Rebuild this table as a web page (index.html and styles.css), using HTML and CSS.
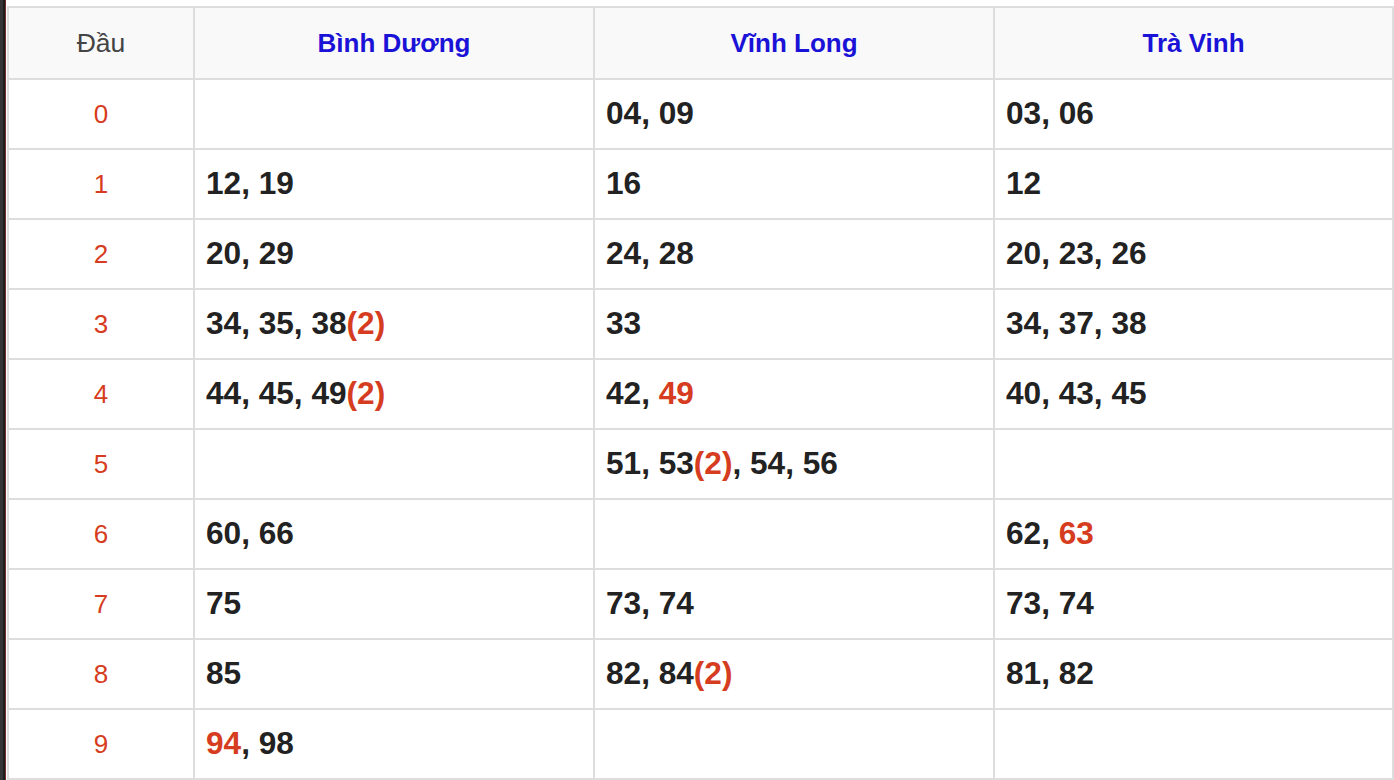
FILE: index.html
```html
<!DOCTYPE html>
<html lang="vi">
<head>
<meta charset="utf-8">
<title>Lô tô</title>
<link rel="stylesheet" href="styles.css">
</head>
<body>
<div class="edge"></div>
<div class="board">
  <div class="cell head head-dau">Đầu</div>
  <div class="cell head">Bình Dương</div>
  <div class="cell head">Vĩnh Long</div>
  <div class="cell head">Trà Vinh</div>

  <div class="cell dau">0</div>
  <div class="cell num"></div>
  <div class="cell num">04, 09</div>
  <div class="cell num">03, 06</div>

  <div class="cell dau">1</div>
  <div class="cell num">12, 19</div>
  <div class="cell num">16</div>
  <div class="cell num">12</div>

  <div class="cell dau">2</div>
  <div class="cell num">20, 29</div>
  <div class="cell num">24, 28</div>
  <div class="cell num">20, 23, 26</div>

  <div class="cell dau">3</div>
  <div class="cell num">34, 35, 38<span class="hl">(2)</span></div>
  <div class="cell num">33</div>
  <div class="cell num">34, 37, 38</div>

  <div class="cell dau">4</div>
  <div class="cell num">44, 45, 49<span class="hl">(2)</span></div>
  <div class="cell num">42, <span class="hl">49</span></div>
  <div class="cell num">40, 43, 45</div>

  <div class="cell dau">5</div>
  <div class="cell num"></div>
  <div class="cell num">51, 53<span class="hl">(2)</span>, 54, 56</div>
  <div class="cell num"></div>

  <div class="cell dau">6</div>
  <div class="cell num">60, 66</div>
  <div class="cell num"></div>
  <div class="cell num">62, <span class="hl">63</span></div>

  <div class="cell dau">7</div>
  <div class="cell num">75</div>
  <div class="cell num">73, 74</div>
  <div class="cell num">73, 74</div>

  <div class="cell dau">8</div>
  <div class="cell num">85</div>
  <div class="cell num">82, 84<span class="hl">(2)</span></div>
  <div class="cell num">81, 82</div>

  <div class="cell dau">9</div>
  <div class="cell num"><span class="hl">94</span>, 98</div>
  <div class="cell num"></div>
  <div class="cell num"></div>
</div>
</body>
</html>
```

FILE: styles.css
```css
html, body {
  margin: 0;
  padding: 0;
  background: #fff;
  height: 100%;
  overflow: hidden;
}

body {
  display: flex;
  align-items: flex-start;
  font-family: "Liberation Sans", Arial, sans-serif;
}

.edge {
  flex: 0 0 7px;
  align-self: stretch;
  background: linear-gradient(to right, #353535 0, #353535 3px, #1e1e1e 3px, #1e1e1e 5px, #7a2a2a 5px, #7a2a2a 6px, #ffffff 6px);
}

.board {
  margin-top: 6px;
  display: grid;
  grid-template-columns: 186px 400px 400px 399px;
  grid-auto-rows: 70px;
  grid-template-rows: 72px;
  border-top: 2px solid #dddddd;
  border-left: 2px solid #dddddd;
}

.cell {
  box-sizing: border-box;
  border-right: 2px solid #dddddd;
  border-bottom: 2px solid #dddddd;
  white-space: nowrap;
}

.head {
  background: #f9f9f9;
  text-align: center;
  line-height: 70px;
  color: #1a12d6;
  font-weight: bold;
  font-size: 26px;
}

.head-dau {
  color: #444444;
  font-weight: normal;
  font-size: 26.5px;
}

.dau {
  text-align: center;
  line-height: 68px;
  color: #d63c20;
  font-size: 26px;
}

.num {
  padding-left: 11px;
  line-height: 66px;
  color: #222222;
  font-weight: bold;
  font-size: 31.6px;
}

.hl {
  color: #d63c20;
}
```
